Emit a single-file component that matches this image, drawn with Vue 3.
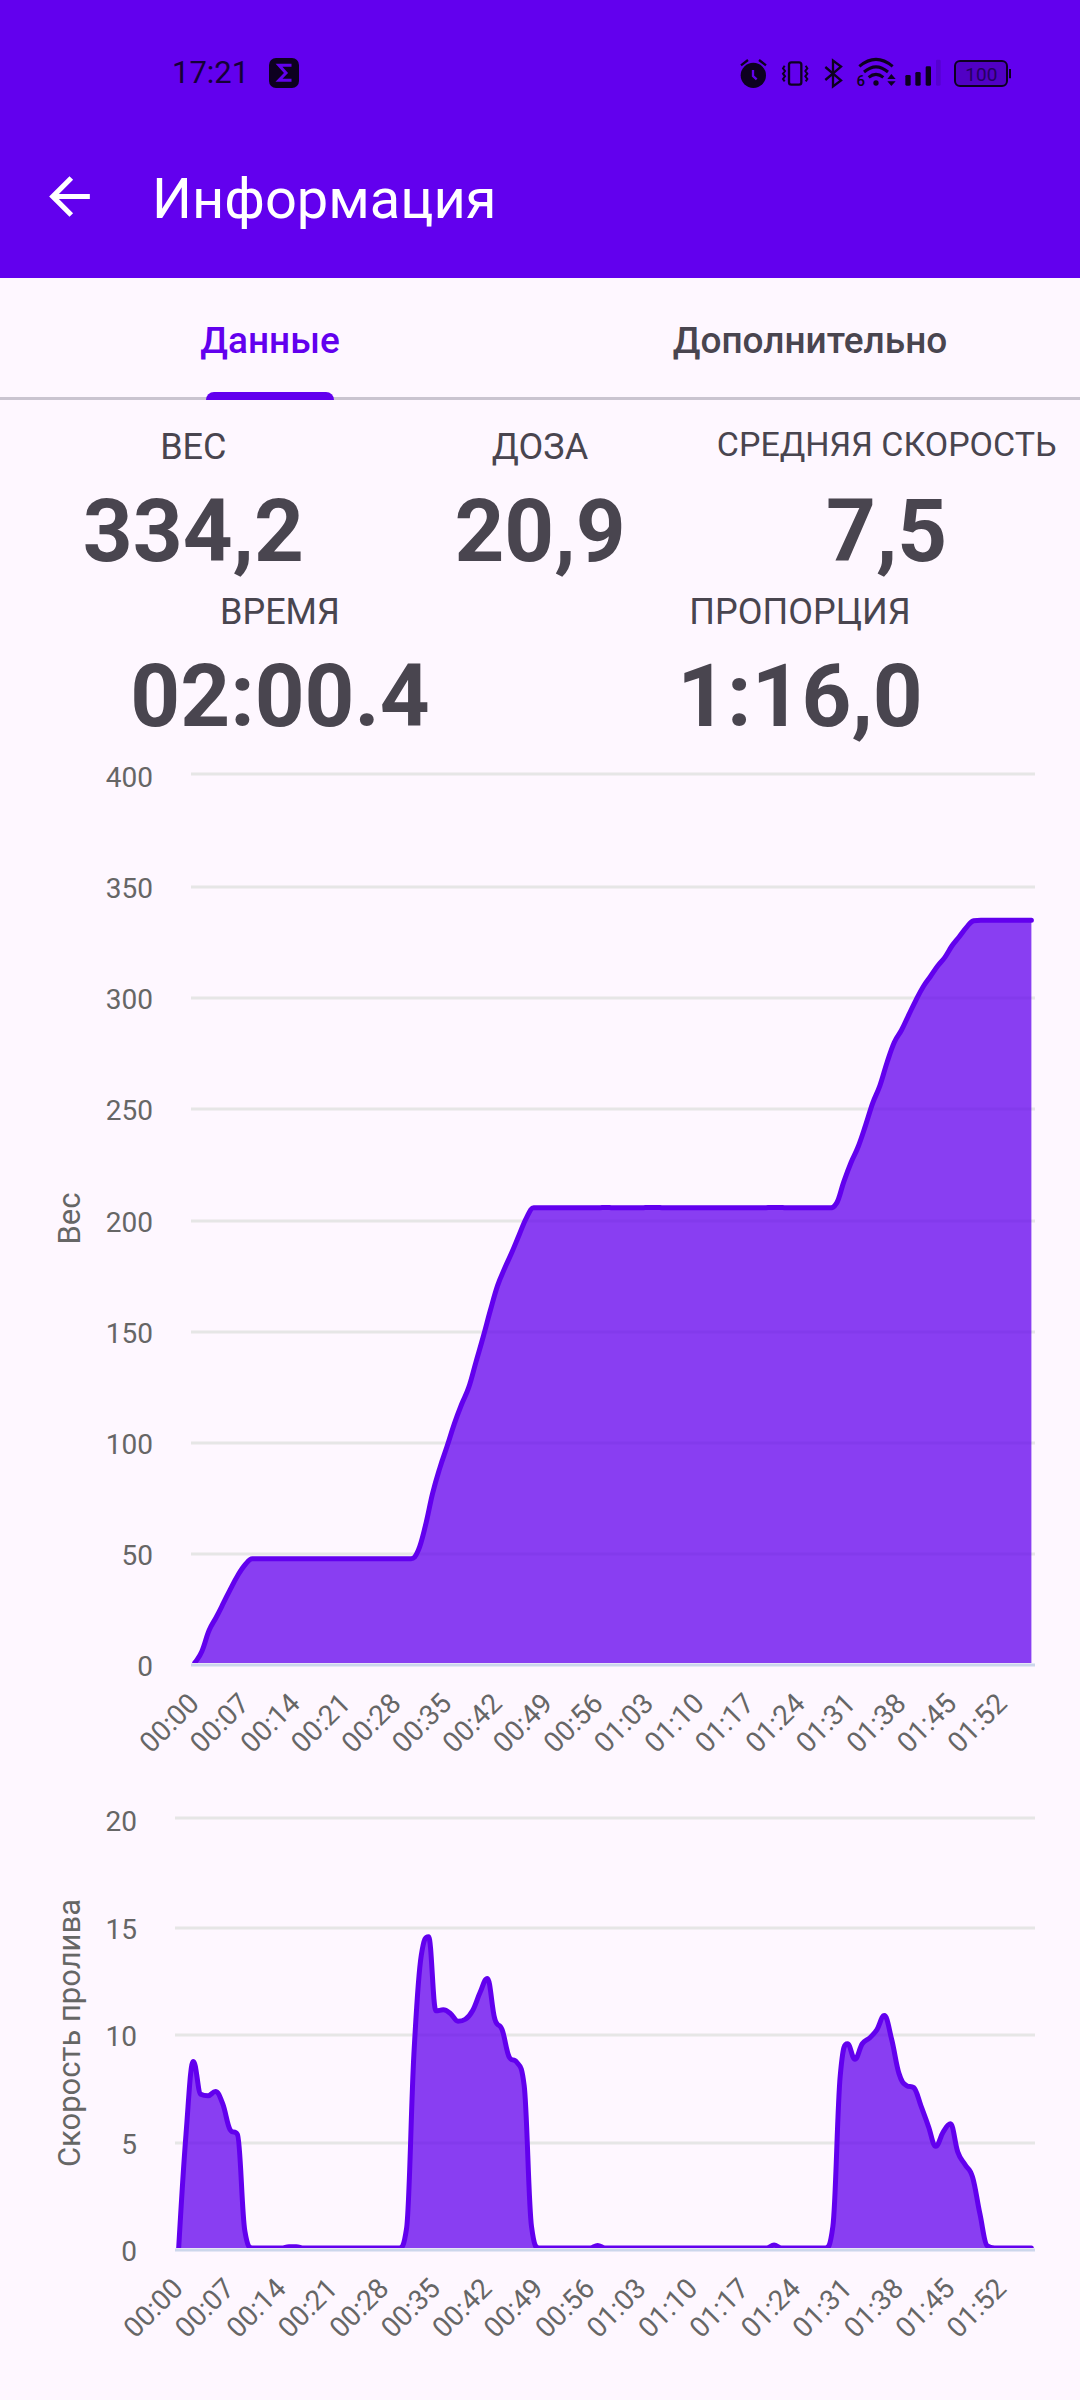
<script setup>
import { ref } from 'vue'

const tabs = ['Данные', 'Дополнительно']
const activeTab = ref(0)

const statRows = [
  [
    { label: 'ВЕС', value: '334,2' },
    { label: 'ДОЗА', value: '20,9' },
    { label: 'СРЕДНЯЯ СКОРОСТЬ', value: '7,5', long: true },
  ],
  [
    { label: 'ВРЕМЯ', value: '02:00.4' },
    { label: 'ПРОПОРЦИЯ', value: '1:16,0' },
  ],
]

const fill = (value, count) => Array(count).fill(value)

// One sample per second
const weight = [
  0, 5.2, 14.6, 20.6, 27, 33.5, 39.5, 44.2,
  ...fill(46.9, 23),
  50.6, 61.8, 76.4, 87.8, 97.5, 107.6, 116.3, 124, 135.4, 146.7, 158.7, 169.8,
  177.7, 184.9, 192.7, 200.3, 204.8,
  ...fill(204.8, 9), 205, ...fill(204.8, 5), 205, 205, ...fill(204.8, 15),
  205, 205, ...fill(204.8, 7),
  206.9, 216.6, 225.2, 232.4, 241.8, 251.9, 259.8, 270.3, 279.3, 284.8, 291.6,
  298.3, 304.3, 308.9, 313.6, 317.5, 322.7, 326.8, 331, 334,
  ...fill(334.2, 8),
]

const flow = [
  0, 5.3, 8.68, 7.15, 7.08, 7.28, 6.7, 5.5, 5.28, 0.8,
  ...fill(0, 5), 0.06, 0.06, ...fill(0, 14),
  0.9, 9, 13.6, 14.48, 11.03, 11.08, 10.9, 10.55, 10.64, 11.05, 11.88, 12.54,
  10.66, 10.16, 8.86, 8.64, 7.57, 1,
  ...fill(0, 8), 0.12, ...fill(0, 23), 0.14, ...fill(0, 7),
  1, 8, 9.5, 8.78, 9.5, 9.77, 10.16, 10.81, 9.7, 8.11, 7.56, 7.46, 6.6, 5.66,
  4.73, 5.39, 5.78, 4.46, 3.87, 3.3, 1.6, 0.1,
  ...fill(0, 6),
]

// Smoothed path through the points, without overshooting local extremes
function spline(pts) {
  let d = `M${pts[0].x} ${pts[0].y}`
  let prevRight = pts[0]
  for (let i = 1; i < pts.length; i++) {
    const last = pts[i - 1]
    const p = pts[i]
    const next = pts[i + 1]
    let left = p
    let right = p
    if (next) {
      const lx = (1.5 * p.x + last.x) / 2.5
      let ly = (1.5 * p.y + last.y) / 2.5
      const rx = (1.5 * p.x + next.x) / 2.5
      let ry = (1.5 * p.y + next.y) / 2.5
      const shift = ((ry - ly) * (rx - p.x)) / (rx - lx) + p.y - ry
      ly += shift
      ry += shift
      const clamp = (v, a, b) => Math.min(Math.max(v, Math.min(a, b)), Math.max(a, b))
      const cl = clamp(ly, last.y, p.y)
      if (cl !== ly) {
        ly = cl
        ry = 2 * p.y - ly
      }
      const cr = clamp(ry, next.y, p.y)
      if (cr !== ry) {
        ry = cr
        ly = 2 * p.y - ry
      }
      left = { x: lx, y: ly }
      right = { x: rx, y: ry }
    }
    d += `C${[prevRight.x, prevRight.y, left.x, left.y, p.x, p.y].map((n) => n.toFixed(2)).join(' ')}`
    prevRight = right
  }
  return d
}

const clock = (s) =>
  `${String(Math.floor(s / 60)).padStart(2, '0')}:${String(s % 60).padStart(2, '0')}`

function buildChart({ id, title, data, height, left, top, bottom, max, step }) {
  const right = 1035
  const slot = (right - left) / data.length
  const x = (i) => left + slot * (i + 0.5)
  const y = (v) => bottom - (v / max) * (bottom - top)
  const line = spline(data.map((v, i) => ({ x: x(i), y: y(v) })))
  const yTicks = []
  for (let v = 0; v <= max; v += step) {
    yTicks.push({ v, label: y(v) + 13, grid: Math.round(y(v)) + (v === max ? 0 : 2) })
  }
  const xTicks = []
  for (let i = 0; i < data.length - 1; i += 7) {
    xTicks.push({ text: clock(i), x: x(i) + 6, y: bottom + 42 })
  }
  return {
    id, title, height, left, right, top, bottom, line, yTicks, xTicks,
    area: `${line}L${x(data.length - 1)} ${bottom}L${x(0)} ${bottom}Z`,
    labelX: left - 38,
    middle: (top + bottom) / 2,
  }
}

const charts = [
  buildChart({ id: 'weight', title: 'Вес', data: weight, height: 1023, left: 191, top: 27, bottom: 916, max: 400, step: 50 }),
  buildChart({ id: 'flow', title: 'Скорость пролива', data: flow, height: 630, left: 175, top: 48, bottom: 478, max: 20, step: 5 }),
]
</script>

<template>
  <div class="screen">
    <header class="header">
      <div class="status">
        <span class="time">17:21</span>
        <svg class="app-mark" viewBox="0 0 30 30" aria-hidden="true">
          <rect width="30" height="30" rx="7" fill="#0d0020" />
          <path d="M22.500 7.300H10L17 15l-7 7.300H22.500" fill="none" stroke="#6200ee" stroke-width="3" />
        </svg>
        <div class="indicators">
          <svg width="35" height="32" viewBox="117 78 105 96" aria-hidden="true">
            <circle cx="160" cy="133" r="38" fill="#0d0020" />
            <path d="M123 103l21-16M198 103l-21-16" stroke="#0d0020" stroke-width="7" />
            <path d="M159 117v18l11 10" fill="none" stroke="#6200ee" stroke-width="7" />
          </svg>
          <svg width="35" height="32" viewBox="240 78 105 96" aria-hidden="true">
            <rect x="267" y="94" width="37" height="67" rx="7" fill="none" stroke="#0d0020" stroke-width="7" />
            <path d="M254 104l-5 8 6 8-6 8 6 8-6 8 5 7M317 104l5 8-6 8 6 8-6 8 6 8-5 7" fill="none" stroke="#0d0020" stroke-width="6" />
          </svg>
          <svg width="29" height="32" viewBox="363 78 87 96" aria-hidden="true">
            <path d="M376 108l47 40-24 18V89l24 18-47 40" fill="none" stroke="#0d0020" stroke-width="7" />
          </svg>
          <svg width="42" height="32" viewBox="468 78 126 96" aria-hidden="true">
            <g fill="none" stroke="#0d0020" stroke-width="9">
              <path d="M478 106Q528 64 578 106" />
              <path d="M492 123Q528 92 564 123" />
              <path d="M506 139Q528 121 550 139" />
            </g>
            <circle cx="528" cy="156" r="8" fill="#0d0020" />
            <path d="M562 144l12-15 13 15zM562 151l12 14 13-14z" fill="#0d0020" />
            <text x="482" y="164" text-anchor="middle" font-size="45" font-weight="500" fill="#0d0020">6</text>
          </svg>
          <svg width="42" height="32" viewBox="612 78 126 96" aria-hidden="true">
            <rect x="616" y="132" width="16" height="32" rx="4" fill="#0d0020" />
            <rect x="646" y="123" width="16" height="41" rx="4" fill="#0d0020" />
            <rect x="677" y="106" width="16" height="58" rx="4" fill="#0d0020" />
            <rect x="708" y="86" width="14" height="78" rx="4" fill="#0d0020" opacity=".15" />
          </svg>
          <svg width="60" height="32" viewBox="756 78 180 96" aria-hidden="true">
            <rect x="765" y="90" width="156" height="75" rx="15" fill="#0d0020" fill-opacity=".2" stroke="#0d0020" stroke-width="6" />
            <path d="M930 114v28" stroke="#0d0020" stroke-width="6" />
            <text x="844" y="150" text-anchor="middle" font-size="57" fill="#250060">100</text>
          </svg>
        </div>
      </div>
      <div class="toolbar">
        <button class="back" type="button" aria-label="Назад">
          <svg viewBox="0 0 24 24" aria-hidden="true">
            <path d="M20 11H7.830l5.590-5.590L12 4l-8 8 8 8 1.410-1.410L7.830 13H20z" fill="#fff" />
          </svg>
        </button>
        <h1>Информация</h1>
      </div>
    </header>

    <nav class="tabs" role="tablist">
      <button
        v-for="(tab, i) in tabs"
        :key="tab"
        type="button"
        role="tab"
        class="tab"
        :class="{ active: activeTab === i }"
        :aria-selected="activeTab === i"
        @click="activeTab = i"
      >
        {{ tab }}
      </button>
    </nav>

    <main>
      <section class="stats">
        <div v-for="(row, r) in statRows" :key="r" class="stat-row">
          <div v-for="stat in row" :key="stat.label" class="stat">
            <div class="stat-label" :class="{ long: stat.long }">{{ stat.label }}</div>
            <div class="stat-value">{{ stat.value }}</div>
          </div>
        </div>
      </section>

      <svg
        v-for="c in charts"
        :key="c.id"
        class="chart"
        :viewBox="`0 0 1080 ${c.height}`"
        role="img"
        :aria-label="c.title"
      >
        <clipPath :id="`plot-${c.id}`">
          <rect :x="c.left" :y="c.top" :width="c.right - c.left" :height="c.bottom - c.top" />
        </clipPath>
        <path v-for="t in c.yTicks" :key="t.v" class="grid" :class="{ axis: t.v === 0 }" :d="`M${c.left} ${t.grid}H${c.right}`" />
        <g :clip-path="`url(#plot-${c.id})`">
          <path class="area" :d="c.area" />
          <path class="line" :d="c.line" />
        </g>
        <text v-for="t in c.yTicks" :key="t.v" class="tick" :x="c.labelX" :y="t.label">{{ t.v }}</text>
        <text
          v-for="t in c.xTicks"
          :key="t.text"
          class="tick"
          :x="t.x"
          :y="t.y"
          :transform="`rotate(-45 ${t.x} ${t.y})`"
        >{{ t.text }}</text>
        <text class="axis-title" x="80" :y="c.middle" :transform="`rotate(-90 80 ${c.middle})`">{{ c.title }}</text>
      </svg>
    </main>
  </div>
</template>

<style>
body {
  background: #fef7ff;
}
</style>

<style scoped>
.screen {
  font-family: Roboto, "Noto Sans", sans-serif;
  color: #49454f;
  background: #fef7ff;
}

.header {
  background: #6200ee;
}

.status {
  display: flex;
  align-items: center;
  height: 62px;
  padding: 42px 68px 0 172px;
}

.time {
  font-size: 31px;
  line-height: 36px;
  color: #150038;
}

.app-mark {
  width: 30px;
  height: 30px;
  margin-left: 20px;
}

.indicators {
  display: flex;
  gap: 6px;
  margin-left: auto;
}

.toolbar {
  display: flex;
  gap: 52px;
  padding: 62px 39px 46px;
}

.back {
  width: 61px;
  height: 61px;
  padding: 0;
  border: 0;
  background: none;
}

.back svg {
  display: block;
  width: 61px;
  height: 61px;
}

h1 {
  margin: 0;
  font-size: 56px;
  font-weight: 400;
  line-height: 66px;
  color: #fff;
}

.tabs {
  display: flex;
  border-bottom: 3px solid #cac4d0;
}

.tab {
  position: relative;
  flex: 1;
  height: 119px;
  padding: 6px 0 0;
  border: 0;
  background: none;
  font: 500 37px/42px Roboto, "Noto Sans", sans-serif;
  color: #49454f;
}

.tab.active {
  color: #6200ee;
}

.tab.active::after {
  content: "";
  position: absolute;
  bottom: -3px;
  left: 50%;
  width: 128px;
  height: 8px;
  margin-left: -64px;
  border-radius: 8px 8px 0 0;
  background: #6200ee;
}

.stats {
  display: flex;
  flex-direction: column;
  gap: 6px;
  padding: 23px 20px 0;
}

.stat-row {
  display: flex;
}

.stat {
  flex: 1 1 0;
  display: flex;
  flex-direction: column;
  gap: 9px;
  text-align: center;
}

.stat-label {
  height: 48px;
  font-size: 36px;
  line-height: 48px;
  white-space: nowrap;
}

.stat-label.long {
  font-size: 34px;
  line-height: 42px;
}

.stat-value {
  font-size: 87px;
  font-weight: 700;
  line-height: 102px;
}

.chart {
  display: block;
  width: 100%;
  height: auto;
}

.grid {
  stroke: #e6e6e6;
  stroke-width: 3;
}

.axis {
  stroke: #ccd6eb;
}

.area {
  fill: #6200ee;
  fill-opacity: 0.75;
}

.line {
  fill: none;
  stroke: #6200ee;
  stroke-width: 5;
  stroke-linecap: round;
  stroke-linejoin: round;
}

.tick {
  font-size: 28px;
  fill: #666;
  text-anchor: end;
}

.axis-title {
  font-size: 31px;
  fill: #666;
  text-anchor: middle;
}
</style>
